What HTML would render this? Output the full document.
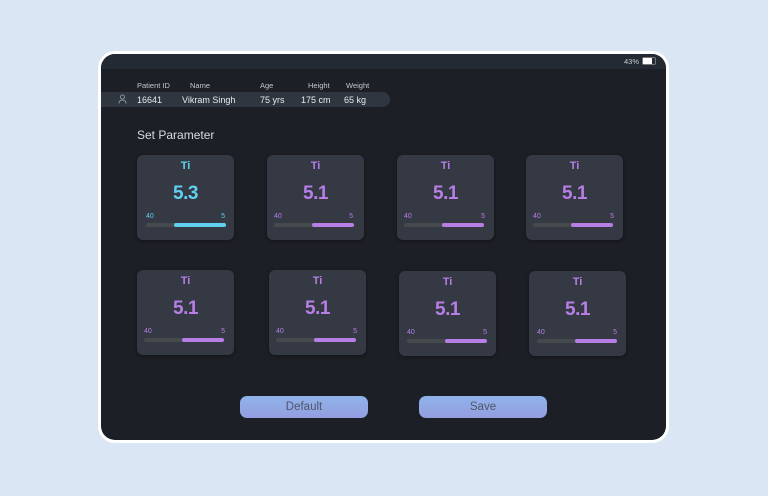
<!DOCTYPE html>
<html><head><style>
body{margin:0;width:768px;height:496px;background:#dbe6f4;font-family:"Liberation Sans",sans-serif;position:relative;overflow:hidden}
.dev{position:absolute;left:98px;top:51px;width:571px;height:392px;background:#fff;border-radius:17px}
.scr{position:absolute;left:101px;top:54px;width:565px;height:386px;background:#1c1f25;border-radius:14px;overflow:hidden}
.sb{position:absolute;left:0;top:0;width:100%;height:15px;background:#242a33}
.a{position:absolute}
.h{position:absolute;top:27px;font-size:7.5px;color:#c4c8ce}
.d{position:absolute;top:41px;font-size:9px;color:#e8eaee}
.card{position:absolute;width:97px;height:85px;background:#343943;border-radius:6px;box-shadow:0 1px 3px rgba(0,0,0,.4)}
.card .t{position:absolute;top:5px;width:100%;text-align:center;font-size:11px;font-weight:bold}
.card .v{position:absolute;top:28px;width:100%;text-align:center;font-size:19px;font-weight:bold;letter-spacing:-0.5px}
.card .l{position:absolute;top:58px;font-size:7px}
.card .bar{position:absolute;left:9px;top:68px;width:80px;height:4px;background:#454b4d;border-radius:2px}
.card .f{position:absolute;right:0;top:0;height:4px;width:52px;border-radius:2px}
.btn{position:absolute;top:342px;width:128px;height:22px;border-radius:7px;background:linear-gradient(#8fb3ea,#949ee0);color:#4f5568;font-size:11.5px;text-align:center;line-height:22px}
</style></head><body>
<div class="dev"></div>
<div class="scr">
<div class="sb"></div>
<div class="a" style="left:523px;top:3px;font-size:7.5px;color:#c8ccd2">43%</div>
<div class="a" style="left:541px;top:3px;width:14px;height:8px;border:1px solid #777;border-radius:2px;box-sizing:border-box"><div style="width:9px;height:6px;background:#fff"></div></div>
<div class="a" style="left:0;top:38px;width:289px;height:15px;background:#303640;border-radius:0 8px 8px 0"></div>
<div class="h" style="left:36px">Patient ID</div>
<div class="h" style="left:89px">Name</div>
<div class="h" style="left:159px">Age</div>
<div class="h" style="left:207px">Height</div>
<div class="h" style="left:245px">Weight</div>
<svg class="a" style="left:17px;top:40px" width="9" height="10" viewBox="0 0 9 10"><circle cx="4.5" cy="3" r="2" fill="none" stroke="#9aa" stroke-width=".8"/><path d="M1 9.5Q1 6 4.5 6Q8 6 8 9.5" fill="none" stroke="#9aa" stroke-width=".8"/></svg>
<div class="d" style="left:36px">16641</div>
<div class="d" style="left:81px">Vikram Singh</div>
<div class="d" style="left:159px">75 yrs</div>
<div class="d" style="left:200px">175 cm</div>
<div class="d" style="left:243px">65 kg</div>
<div class="a" style="top:74px;font-size:12px;color:#d8dbe0;left:36px">Set Parameter</div>

<div class="card" style="left:36px;top:101px;color:#5fd0ee"><div class="t">Ti</div><div class="v">5.3</div><div class="l" style="left:9px">40</div><div class="l" style="right:9px">5</div><div class="bar"><div class="f" style="background:#5fd0ee"></div></div></div>
<div class="card" style="left:166px;top:101px;color:#b77ee6"><div class="t">Ti</div><div class="v">5.1</div><div class="l" style="left:7px">40</div><div class="l" style="right:11px">5</div><div class="bar" style="left:7px"><div class="f" style="background:#b77ee6;width:42px"></div></div></div>
<div class="card" style="left:296px;top:101px;color:#b77ee6"><div class="t">Ti</div><div class="v">5.1</div><div class="l" style="left:7px">40</div><div class="l" style="right:9px">5</div><div class="bar" style="left:7px"><div class="f" style="background:#b77ee6;width:42px"></div></div></div>
<div class="card" style="left:425px;top:101px;color:#b77ee6"><div class="t">Ti</div><div class="v">5.1</div><div class="l" style="left:7px">40</div><div class="l" style="right:9px">5</div><div class="bar" style="left:7px"><div class="f" style="background:#b77ee6;width:42px"></div></div></div>

<div class="card" style="left:36px;top:216px;color:#b77ee6"><div class="t">Ti</div><div class="v">5.1</div><div class="l" style="left:7px">40</div><div class="l" style="right:9px">5</div><div class="bar" style="left:7px"><div class="f" style="background:#b77ee6;width:42px"></div></div></div>
<div class="card" style="left:168px;top:216px;color:#b77ee6"><div class="t">Ti</div><div class="v">5.1</div><div class="l" style="left:7px">40</div><div class="l" style="right:9px">5</div><div class="bar" style="left:7px"><div class="f" style="background:#b77ee6;width:42px"></div></div></div>
<div class="card" style="left:298px;top:217px;color:#b77ee6"><div class="t">Ti</div><div class="v">5.1</div><div class="l" style="left:8px">40</div><div class="l" style="right:9px">5</div><div class="bar" style="left:8px"><div class="f" style="background:#b77ee6;width:42px"></div></div></div>
<div class="card" style="left:428px;top:217px;color:#b77ee6"><div class="t">Ti</div><div class="v">5.1</div><div class="l" style="left:8px">40</div><div class="l" style="right:9px">5</div><div class="bar" style="left:8px"><div class="f" style="background:#b77ee6;width:42px"></div></div></div>

<div class="btn" style="left:139px">Default</div>
<div class="btn" style="left:318px">Save</div>
</div>
</body></html>
